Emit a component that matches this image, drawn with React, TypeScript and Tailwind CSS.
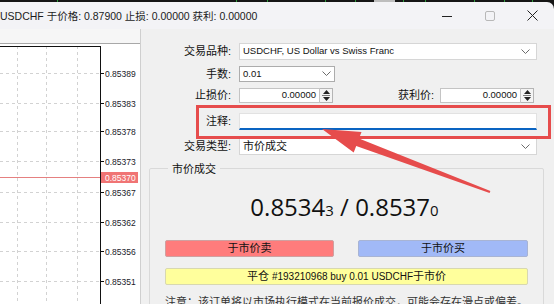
import React from "react";

const prices = [
  { v: "0.85389", y: 73 },
  { v: "0.85383", y: 103 },
  { v: "0.85378", y: 131 },
  { v: "0.85373", y: 161 },
  { v: "0.85367", y: 192 },
  { v: "0.85362", y: 222 },
  { v: "0.85356", y: 251 },
  { v: "0.85351", y: 281 },
];

function Chevron() {
  return (
    <svg width="9" height="5" viewBox="0 0 9 5" className="shrink-0">
      <path d="M0.5 0.5 L4.5 4.5 L8.5 0.5" fill="none" stroke="#6b6b6b" strokeWidth="1" />
    </svg>
  );
}

function Spinner() {
  return (
    <div className="w-[13px] h-full border border-[#b5b5b5] border-l-0 bg-[#f4f4f4] flex flex-col">
      <div className="flex-1 flex items-center justify-center">
        <svg width="7" height="4" viewBox="0 0 7 4">
          <path d="M0 4 L3.5 0 L7 4 Z" fill="#222" />
        </svg>
      </div>
      <div className="h-px bg-[#7a7a7a] mx-[2px]" />
      <div className="flex-1 flex items-center justify-center">
        <svg width="7" height="4" viewBox="0 0 7 4">
          <path d="M0 0 L3.5 4 L7 0 Z" fill="#222" />
        </svg>
      </div>
    </div>
  );
}

const cjk = "font-['Liberation_Sans','Noto_Sans_CJK_SC',sans-serif]";

export default function App() {
  const cy = (y: number) => y - 29;
  return (
    <div className={`relative w-[554px] h-[304px] overflow-hidden bg-[#151515] ${cjk} text-[#111]`}>
      {/* chart strip behind window */}
      <svg width="554" height="2" className="block">
        {[57, 236, 267, 325, 355, 403, 425, 474, 504, 532].map((x) => (
          <rect key={x} x={x} y={0} width={1} height={2} fill="#2f9a3a" />
        ))}
        <rect x={374} y={0} width={21} height={2} fill="#bdbdbd" />
      </svg>

      {/* title bar */}
      <div className="h-[27px] bg-[#f3f3f6] rounded-tr-[7px] flex items-center">
        <div className="flex-1 text-[10.5px] leading-none pt-[1px] whitespace-nowrap text-[#1b1b1b]">
          USDCHF 于价格: 0.87900 止损: 0.00000 获利: 0.00000
        </div>
        <div className="flex items-center h-full">
          <div className="w-[43px] h-full flex items-center justify-center">
            <svg width="10" height="10" viewBox="0 0 10 10">
              <path d="M0 5.5 H10" stroke="#222" strokeWidth="1" />
            </svg>
          </div>
          <div className="w-[43px] h-full flex items-center justify-center">
            <svg width="10" height="10" viewBox="0 0 10 10">
              <rect x="0.5" y="0.5" width="9" height="9" rx="1.5" fill="none" stroke="#b8b8b8" strokeWidth="1" />
            </svg>
          </div>
          <div className="w-[43px] h-full flex items-center justify-center">
            <svg width="11" height="11" viewBox="0 0 11 11">
              <path d="M0.5 0.5 L10.5 10.5 M10.5 0.5 L0.5 10.5" stroke="#222" strokeWidth="1" />
            </svg>
          </div>
        </div>
      </div>

      {/* body */}
      <div className="flex h-[275px] bg-[#f0f0f0]">
        {/* chart */}
        <div className="w-[141px] h-full shrink-0">
          <svg width="141" height="275" className="block">
            <rect x={0} y={0} width={141} height={14} fill="#f6f6f6" />
            <rect x={0} y={14} width={140} height={261} fill="#ffffff" />
            <line x1={0} y1={14.5} x2={140} y2={14.5} stroke="#a8a8a8" />
            <line x1={140.5} y1={0} x2={140.5} y2={275} stroke="#cfcfcf" />
            {prices.map((p) => (
              <line key={"h" + p.v} x1={0} y1={cy(p.y) + 0.5} x2={100} y2={cy(p.y) + 0.5} stroke="#d2d2d2" strokeDasharray="3 3" />
            ))}
            {[17, 46, 77].map((x) => (
              <line key={"v" + x} x1={x + 0.5} y1={17} x2={x + 0.5} y2={275} stroke="#d2d2d2" strokeDasharray="3 3" />
            ))}
            <line x1={0} y1={17.5} x2={100.5} y2={17.5} stroke="#111" />
            <line x1={100.5} y1={17} x2={100.5} y2={275} stroke="#111" />
            <line x1={0} y1={cy(177) + 0.5} x2={100} y2={cy(177) + 0.5} stroke="#e58080" />
            {prices.map((p) => (
              <g key={"t" + p.v}>
                <line x1={100} y1={cy(p.y) + 0.5} x2={104} y2={cy(p.y) + 0.5} stroke="#111" />
                <text x={105} y={cy(p.y) + 3.5} fontSize="8.5" fontFamily="Liberation Sans, sans-serif" fill="#1a1a2a">
                  {p.v}
                </text>
              </g>
            ))}
            <rect x={101} y={cy(172)} width={37} height={11} fill="#f07474" />
            <text x={105} y={cy(177) + 3.5} fontSize="8.5" fontFamily="Liberation Sans, sans-serif" fill="#ffffff">
              0.85370
            </text>
          </svg>
        </div>

        {/* form panel */}
        <div className="flex-1 min-w-0 flex flex-col text-[11px]">
          {/* row 1 */}
          <div className="mt-[14px] h-[18px] flex items-center">
            <div className="w-[90px] text-right">交易品种:</div>
            <div className="ml-[8px] w-[298px] h-full bg-white border border-[#d6d6d6] flex items-center justify-between pl-[3px] pr-[6px] text-[9.5px]">
              <span>USDCHF, US Dollar vs Swiss Franc</span>
              <Chevron />
            </div>
          </div>
          {/* row 2 */}
          <div className="mt-[6px] h-[17px] flex items-center">
            <div className="w-[90px] text-right">手数:</div>
            <div className="ml-[8px] w-[96px] h-full bg-white border border-[#acacac] flex items-center justify-between pl-[3px] pr-[3px] text-[9.5px]">
              <span>0.01</span>
              <Chevron />
            </div>
          </div>
          {/* row 3 */}
          <div className="mt-[6px] h-[15px] flex items-center">
            <div className="w-[90px] text-right">止损价:</div>
            <div className="ml-[8px] h-full flex">
              <div className="w-[81px] h-full bg-white border border-[#c4c4c4] flex items-center justify-end pr-[3px] text-[9.5px]">
                0.00000
              </div>
              <Spinner />
            </div>
            <div className="w-[101px] text-right">获利价:</div>
            <div className="ml-[6px] h-full flex">
              <div className="w-[81px] h-full bg-white border border-[#c4c4c4] flex items-center justify-end pr-[3px] text-[9.5px]">
                0.00000
              </div>
              <Spinner />
            </div>
          </div>
          {/* row 4 */}
          <div className="mt-[10px] h-[17px] flex items-center">
            <div className="w-[90px] text-right">注释:</div>
            <div className="ml-[8px] w-[298px] h-full bg-white border border-[#e2e2e2] border-b-2 border-b-[#0a64c2]" />
          </div>
          {/* row 5 */}
          <div className="mt-[8px] h-[17px] flex items-center">
            <div className="w-[90px] text-right">交易类型:</div>
            <div className="ml-[8px] w-[298px] h-full bg-white border border-[#d6d6d6] flex items-center justify-between pl-[3px] pr-[6px]">
              <span>市价成交</span>
              <Chevron />
            </div>
          </div>

          {/* group box */}
          <fieldset className="mt-[7px] ml-[8px] w-[395px] min-w-0 flex-1 border border-[#d9d9d9] rounded-[2px] px-[15px]">
            <legend className="ml-[3px] px-[4px] leading-[14px] text-[11px]">市价成交</legend>
            <div className="mt-[15px] h-[32px] leading-[32px] pr-[4px] text-center whitespace-nowrap font-['Open_Sans',sans-serif] text-[24px] text-[#111]">
              0.8534<span className="text-[15px]">3</span> / 0.8537<span className="text-[15px]">0</span>
            </div>
            <div className="mt-[17px] flex justify-between">
              <div className="w-[169px] h-[17px] bg-[#ff7c7c] border border-[#d0a0a0] rounded-[2px] flex items-center justify-center">
                于市价卖
              </div>
              <div className="w-[170px] h-[17px] bg-[#a1b9f7] border border-[#a8b4d4] rounded-[2px] flex items-center justify-center">
                于市价买
              </div>
            </div>
            <div className="mt-[11px] h-[17px] bg-[#ffff9c] border border-[#d8d8b0] rounded-[2px] flex items-center justify-center whitespace-nowrap">
              平仓 <span className="text-[10px] ml-[3px]">#193210968 buy 0.01 USDCHF</span>于市价
            </div>
            <div className="mt-[10px] whitespace-nowrap overflow-hidden text-[#333] leading-[14px]">
              注意：该订单将以市场执行模式在当前报价成交，可能会存在滑点或偏差。
            </div>
          </fieldset>
        </div>
      </div>

      {/* annotation overlay */}
      <div className="absolute left-[196px] top-[105px] w-[355px] h-[34px] border-[3px] border-[#e64c4c] pointer-events-none" />
      <svg width="554" height="304" className="absolute inset-0 pointer-events-none">
        <polygon
          points="322,129 361.5,132 359,138.6 490.4,191.1 489.6,192.9 356.2,146 353.7,152.6"
          fill="#e64c4c"
        />
      </svg>
    </div>
  );
}
